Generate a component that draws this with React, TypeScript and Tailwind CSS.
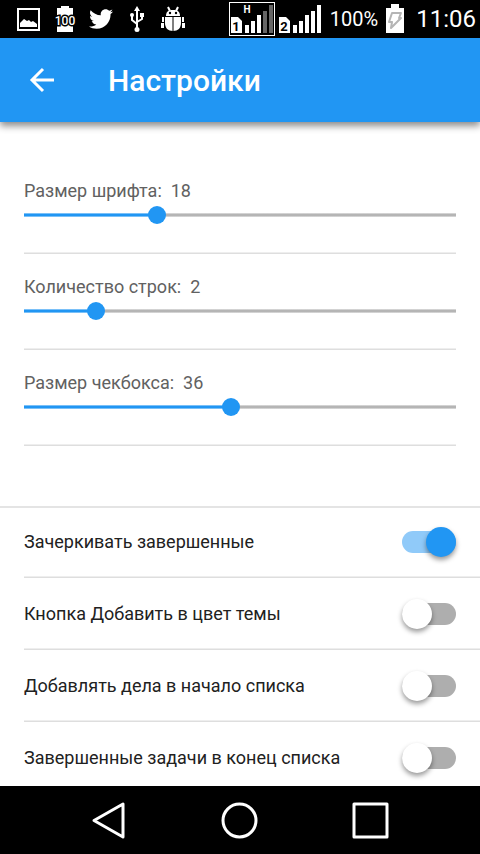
import { useId, useState } from "react";
import type { CSSProperties } from "react";
import { FaTwitter } from "react-icons/fa";

const sliders = [
  { label: "Размер шрифта:", min: 10, max: 36, initial: 18 },
  { label: "Количество строк:", min: 1, max: 7, initial: 2 },
  { label: "Размер чекбокса:", min: 14, max: 60, initial: 36 },
];

const toggles = [
  { label: "Зачеркивать завершенные", initial: true },
  { label: "Кнопка Добавить в цвет темы", initial: false },
  { label: "Добавлять дела в начало списка", initial: false },
  { label: "Завершенные задачи в конец списка", initial: false },
];

function PictureIcon() {
  return (
    <svg className="w-6 h-6" viewBox="0 0 24 24" aria-hidden="true">
      <rect x="1" y="2" width="21" height="21" fill="none" stroke="#fff" strokeWidth="2" />
      <path d="M3 20v-4l4-4 3 2 2-1 2 2 2-1 4 3v3z" fill="#fff" />
    </svg>
  );
}

function BatteryFullIcon() {
  return (
    <svg className="w-6 h-7" viewBox="0 0 24 28" aria-hidden="true">
      <path d="M8 1h8v2h4v24H4V3h4z" fill="#fff" />
      <text
        x="12"
        y="20"
        textAnchor="middle"
        fontFamily="Roboto, sans-serif"
        fontSize="12"
        fontWeight="500"
        fill="#fff"
        stroke="#000"
        strokeWidth="3"
        paintOrder="stroke"
      >
        100
      </text>
    </svg>
  );
}

function UsbIcon() {
  return (
    <svg className="w-[14px] h-[26px]" viewBox="0 0 14 26" aria-hidden="true">
      <g stroke="#fff" strokeWidth="2" fill="none">
        <path d="M7 4v19M2 10v4l5 4M12 9v4l-5 3" />
      </g>
      <path d="M7 0l3 5H4z" fill="#fff" />
      <circle cx="7" cy="23.500" r="2.500" fill="#fff" />
      <circle cx="2" cy="9" r="2" fill="#fff" />
      <rect x="10" y="7" width="4" height="4" fill="#fff" />
    </svg>
  );
}

function DebugIcon() {
  return (
    <svg className="w-[26px] h-7" viewBox="0 0 26 28" aria-hidden="true">
      <path d="M8 2l2 4M18 2l-2 4" stroke="#fff" strokeWidth="2" />
      <path d="M6 11C6 7 8 5 13 5s7 2 7 6z" fill="#fff" />
      <circle cx="10" cy="8" r="1.200" fill="#000" />
      <circle cx="16" cy="8" r="1.200" fill="#000" />
      <path d="M5 12h16v6c0 5-3 8-8 8s-8-3-8-8z" fill="#fff" />
      <path d="M13 12v14" stroke="#000" strokeWidth="1" />
      <path d="M2 12h2v5H2zM1 18h3v5H1zM22 12h2v5h-2zM22 18h3v5h-3z" fill="#fff" />
    </svg>
  );
}

function SignalIcon({ sim, level, network }: { sim: string; level: number; network?: string }) {
  return (
    <svg className="w-[42px] h-8" viewBox="0 0 42 32" aria-hidden="true">
      <path d="M0 14h7l4 4v12H0z" fill="#fff" />
      <text x="5" y="28" textAnchor="middle" fontFamily="Roboto, sans-serif" fontSize="13" fontWeight="700" fill="#000">
        {sim}
      </text>
      {network && (
        <text x="16" y="10" textAnchor="middle" fontFamily="Roboto, sans-serif" fontSize="10" fontWeight="700" fill="#fff">
          {network}
        </text>
      )}
      {[8, 12, 18, 22, 28].map((h, i) => (
        <rect key={h} x={14 + i * 6} y={30 - h} width="4" height={h} fill={i < level ? "#fff" : "#666"} />
      ))}
    </svg>
  );
}

function ChargingIcon() {
  return (
    <svg className="w-[18px] h-[30px]" viewBox="0 0 18 30" aria-hidden="true">
      <path d="M5 0h8v4h5v25H0V4h5z" fill="#fff" />
      <path
        d="M6 9h9l-2 5h2L5 24l1-6H3z"
        fill="none"
        stroke="#b5b5b5"
        strokeWidth="2"
        strokeLinejoin="round"
      />
    </svg>
  );
}

function StatusBar() {
  return (
    <div className="relative z-20 flex items-center justify-between h-[38px] pl-[17px] pr-1 bg-black text-white">
      <div className="flex items-center">
        <PictureIcon />
        <div className="flex items-center gap-3 pl-3">
          <BatteryFullIcon />
          <FaTwitter className="w-6 h-6" />
        </div>
        <div className="flex items-center gap-4 pl-[17px]">
          <UsbIcon />
          <DebugIcon />
        </div>
      </div>
      <div className="flex items-center">
        <div className="border border-white h-[34px] pl-px pr-px">
          <SignalIcon sim="1" level={3} network="H" />
        </div>
        <div className="pl-1">
          <SignalIcon sim="2" level={5} />
        </div>
        <span className="pl-[9px] pr-2 text-[20px] leading-6">100%</span>
        <ChargingIcon />
        <span className="pl-3 text-[24px] leading-7">11:06</span>
      </div>
    </div>
  );
}

function SliderSetting({ label, min, max, initial }: (typeof sliders)[number]) {
  const id = useId();
  const [value, setValue] = useState(initial);
  const fill = `${((value - min) / (max - min)) * 100}%`;

  return (
    <div className="pt-5 pb-[27px] border-b border-[#dedede] shadow-[inset_0_-1px_0_#eeeeee]">
      <label htmlFor={id} className="block text-[18px] leading-[26px] text-[#616161] whitespace-pre">
        {label}{"  "}{value}
      </label>
      {/* the track stops half a thumb short of the input on each side */}
      <div className="-mx-[9px]">
        <input
          id={id}
          type="range"
          min={min}
          max={max}
          value={value}
          onChange={(e) => setValue(Number(e.target.value))}
          style={{ "--fill": fill } as CSSProperties}
          className="block w-full h-[22px] appearance-none outline-none bg-[linear-gradient(rgba(255,255,255,0.4)_1px,transparent_1px,transparent_3px,rgba(255,255,255,0.4)_3px),linear-gradient(to_right,#2196f3_var(--fill),#b5b5b5_var(--fill))] bg-size-[calc(100%-18px)_4px] bg-center bg-no-repeat [&::-webkit-slider-thumb]:appearance-none [&::-webkit-slider-thumb]:w-[18px] [&::-webkit-slider-thumb]:h-[18px] [&::-webkit-slider-thumb]:rounded-full [&::-webkit-slider-thumb]:bg-[#2196f3]"
        />
      </div>
    </div>
  );
}

function ToggleSetting({ label, initial }: (typeof toggles)[number]) {
  const [checked, setChecked] = useState(initial);

  return (
    <label className="flex items-center justify-between h-[72px] pr-6 border-b border-[#dedede] shadow-[inset_0_-1px_0_#eeeeee] text-[18px] leading-6 text-[#212121]">
      <span>{label}</span>
      <input
        type="checkbox"
        role="switch"
        checked={checked}
        onChange={(e) => setChecked(e.target.checked)}
        className="relative shrink-0 w-[54px] h-[30px] appearance-none outline-none before:absolute before:inset-x-0 before:inset-y-1 before:rounded-full before:bg-[#aeaeae] checked:before:bg-[#90caf9] after:absolute after:left-0 after:top-0 after:w-[30px] after:h-[30px] after:rounded-full after:bg-white after:shadow-[0_3px_5px_rgba(0,0,0,0.4)] checked:after:left-6 checked:after:bg-[#2196f3]"
      />
    </label>
  );
}

export default function App() {
  return (
    <div className="flex flex-col h-screen overflow-hidden bg-white font-[Roboto,sans-serif]">
      <StatusBar />

      {/* App bar */}
      <header className="relative z-10 flex items-center shrink-0 h-[84px] pl-6 bg-[#2196f3] text-white shadow-[0_4px_7px_rgba(0,0,0,0.45)]">
        <button type="button" aria-label="Назад" className="w-9 h-9">
          <svg className="w-9 h-9" viewBox="0 0 36 36" fill="none" stroke="currentColor" strokeWidth="3">
            <path d="M30 18H8M19 7L8 18l11 11" />
          </svg>
        </button>
        <h1 className="pl-12 pt-0.5 text-[30px] leading-9 font-medium">Настройки</h1>
      </header>

      {/* Settings */}
      <main className="flex-1 min-h-0 overflow-y-auto [scrollbar-width:none]">
        <section className="px-6 pt-9 pb-[60px]">
          {sliders.map((item) => (
            <SliderSetting key={item.label} {...item} />
          ))}
        </section>
        <section className="pl-6 border-t-2 border-[#e4e4e4]">
          <div className="-mt-0.5">
            {toggles.map((item) => (
              <ToggleSetting key={item.label} {...item} />
            ))}
          </div>
        </section>
      </main>

      {/* System navigation */}
      <nav className="grid grid-cols-3 items-center justify-items-center shrink-0 h-[68px] px-11 bg-black text-white">
        <button type="button" aria-label="Назад">
          <svg className="w-10 h-10" viewBox="0 0 40 40" fill="none" stroke="currentColor" strokeWidth="3" strokeLinejoin="round">
            <path d="M34 4v33L5 20.500z" />
          </svg>
        </button>
        <button type="button" aria-label="Домой">
          <svg className="w-10 h-10" viewBox="0 0 40 40" fill="none" stroke="currentColor" strokeWidth="3">
            <circle cx="19.500" cy="20.500" r="16.500" />
          </svg>
        </button>
        <button type="button" aria-label="Недавние">
          <svg className="w-10 h-10" viewBox="0 0 40 40" fill="none" stroke="currentColor" strokeWidth="3" strokeLinejoin="round">
            <rect x="3" y="4" width="33" height="33" />
          </svg>
        </button>
      </nav>
    </div>
  );
}
